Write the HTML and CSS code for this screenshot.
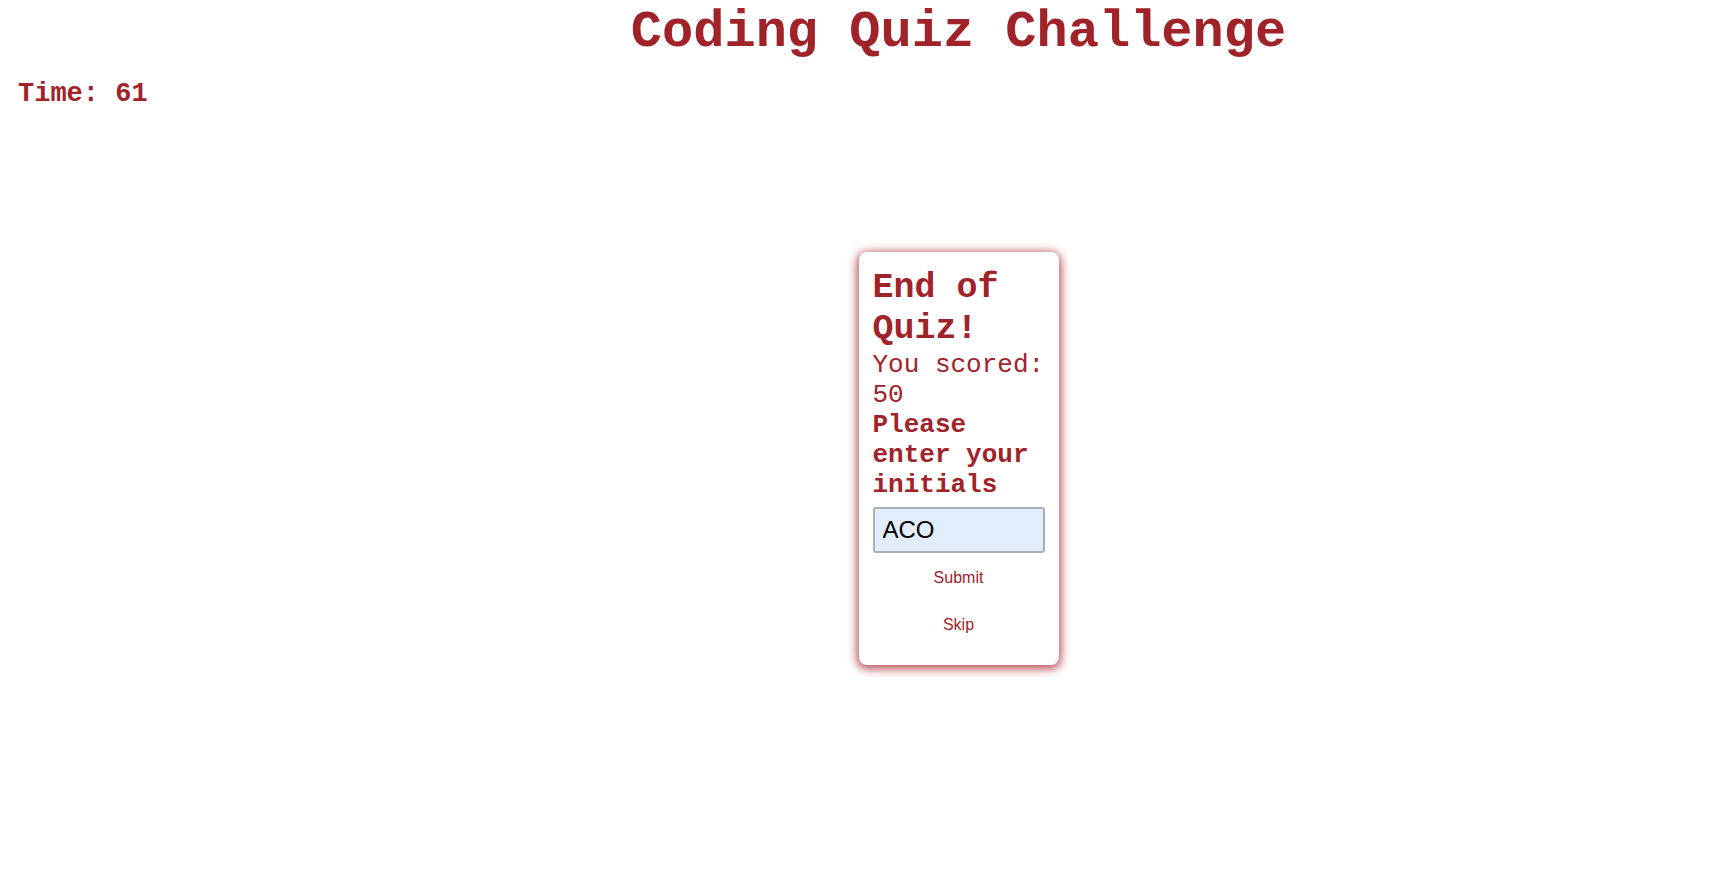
FILE: index.html
```html
<!DOCTYPE html>
<html lang="en">
<head>
<meta charset="utf-8">
<title>Coding Quiz Challenge</title>
<link rel="stylesheet" href="styles.css">
</head>
<body>
<header class="header">
  <h1 class="title">Coding Quiz Challenge</h1>
</header>
<div class="timer">Time: 61</div>
<main class="main">
  <section class="card">
    <h2 class="card-title">End of Quiz!</h2>
    <p class="score">You scored: 50</p>
    <p class="prompt">Please enter your initials</p>
    <input class="initials" type="text" value="ACO">
    <button class="btn" type="button">Submit</button>
    <button class="btn btn-skip" type="button">Skip</button>
  </section>
</main>
</body>
</html>
```

FILE: styles.css
```css
html, body {
  margin: 0;
  padding: 0;
  background: #ffffff;
}

body {
  font-family: "Liberation Mono", "Courier New", monospace;
  color: #a0232a;
}

.header {
  padding-top: 3px;
  padding-left: 198px;
  text-align: center;
}

.title {
  margin: 0;
  font-size: 52px;
  font-weight: bold;
  line-height: normal;
}

.timer {
  margin-top: 17px;
  padding-left: 18px;
  font-size: 27px;
  font-weight: bold;
  line-height: normal;
}

.main {
  padding: 143px 0 40px 198px;
  display: flex;
  justify-content: center;
}

.card {
  width: 172px;
  padding: 16px 14px 20px;
  background: #ffffff;
  border-radius: 8px;
  box-shadow: 0 2px 10px 2px rgba(165, 35, 42, 0.8);
}

.card-title {
  margin: 0;
  font-size: 35px;
  line-height: 41px;
  font-weight: bold;
}

.score {
  margin: 0;
  font-size: 26px;
  line-height: 30px;
  font-weight: normal;
}

.prompt {
  margin: 0;
  font-size: 26px;
  line-height: 30px;
  font-weight: bold;
}

.initials {
  display: block;
  box-sizing: border-box;
  width: 172px;
  height: 46px;
  margin: 7px 0 0;
  padding: 0 8px;
  border: 2px solid #a9aeb7;
  border-radius: 3px;
  background: #e2edfb;
  font-family: "Liberation Sans", Arial, sans-serif;
  font-size: 24px;
  color: #000000;
  outline: none;
}

.btn {
  display: block;
  margin: 5px auto 0;
  height: 40px;
  padding: 0 8px;
  border: none;
  background: transparent;
  font-family: "Liberation Sans", Arial, sans-serif;
  font-size: 16px;
  color: #a0232a;
  cursor: pointer;
}

.btn-skip {
  margin-top: 7px;
}
```
